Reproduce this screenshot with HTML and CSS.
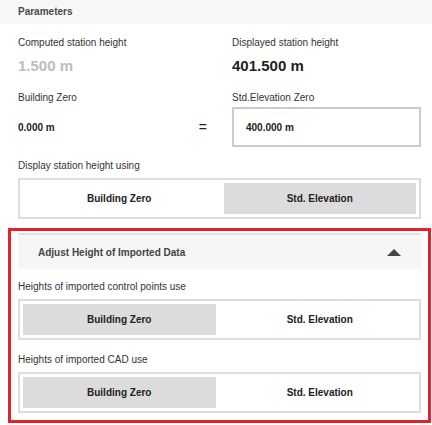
FILE: index.html
```html
<!DOCTYPE html>
<html>
<head>
<meta charset="utf-8">
<link rel="stylesheet" href="styles.css">
</head>
<body>
<div class="panel-title">Parameters</div>
<div class="main">
  <div class="pair-grid">
    <div class="cell">
      <div class="label">Computed station height</div>
      <div class="big-value muted">1.500 m</div>
    </div>
    <div class="cell">
      <div class="label">Displayed station height</div>
      <div class="big-value">401.500 m</div>
    </div>
  </div>
  <div class="pair-grid zero-row">
    <div class="cell">
      <div class="label">Building Zero</div>
      <div class="zero-left">
        <span class="small-value">0.000 m</span>
        <span class="equals">=</span>
      </div>
    </div>
    <div class="cell">
      <div class="label">Std.Elevation Zero</div>
      <div class="input-box"><span class="small-value">400.000 m</span></div>
    </div>
  </div>

  <div class="label section-label">Display station height using</div>
  <div class="segmented">
    <div class="seg-btn">Building Zero</div>
    <div class="seg-btn selected">Std. Elevation</div>
  </div>

  <div class="highlight">
    <div class="collapse-head">
      <span>Adjust Height of Imported Data</span>
      <span class="caret"></span>
    </div>
    <div class="label first-in">Heights of imported control points use</div>
    <div class="segmented">
      <div class="seg-btn selected">Building Zero</div>
      <div class="seg-btn">Std. Elevation</div>
    </div>
    <div class="label second-in">Heights of imported CAD use</div>
    <div class="segmented">
      <div class="seg-btn selected">Building Zero</div>
      <div class="seg-btn">Std. Elevation</div>
    </div>
  </div>
</div>
</body>
</html>
```
FILE: styles.css
```css
html, body {
  margin: 0;
  padding: 0;
  background: #ffffff;
  font-family: "Liberation Sans", Arial, sans-serif;
  color: #333333;
}

.panel-title {
  height: 24px;
  line-height: 24px;
  padding-left: 18px;
  background: #f7f7f7;
  font-size: 10px;
  font-weight: bold;
  color: #4a4a4a;
}

.main {
  padding: 0 11px 0 18px;
}

.pair-grid {
  display: grid;
  grid-template-columns: 1fr 189px;
  column-gap: 18px;
  margin-top: 13px;
}

.zero-row {
  margin-top: 17px;
}

.label {
  font-size: 10px;
  line-height: 12px;
  color: #333333;
}

.big-value {
  margin-top: 8px;
  font-size: 15px;
  line-height: 18px;
  font-weight: bold;
  color: #222222;
}

.big-value.muted {
  color: #bdbdbd;
}

.small-value {
  font-size: 10px;
  font-weight: bold;
  color: #222222;
}

.zero-left {
  margin-top: 3px;
  height: 40px;
  display: flex;
  align-items: center;
  justify-content: space-between;
  padding-right: 7px;
}

.equals {
  font-size: 14px;
  color: #222222;
  line-height: 14px;
}

.input-box {
  margin-top: 3px;
  height: 36px;
  border: 2px solid #cccccc;
  display: flex;
  align-items: center;
  padding-left: 12px;
}

.section-label {
  margin-top: 13px;
}

.segmented {
  margin-top: 6px;
  border: 2px solid #dddddd;
  padding: 3px;
  display: grid;
  grid-template-columns: 1fr 1fr;
  column-gap: 8px;
}

.seg-btn {
  height: 31px;
  display: flex;
  align-items: center;
  justify-content: center;
  font-size: 10px;
  font-weight: bold;
  color: #222222;
}

.seg-btn.selected {
  background: #dcdcdc;
}

.highlight {
  margin: 9px -10px 0 -10px;
  border: 3px solid #e5222b;
  padding: 2px 7px 7px 7px;
}

.collapse-head {
  height: 34px;
  border-top: 2px solid #e2e2e2;
  background: #f6f6f6;
  display: flex;
  align-items: center;
  justify-content: space-between;
  padding: 0 20px;
  font-size: 10px;
  font-weight: bold;
  color: #444444;
}

.caret {
  width: 0;
  height: 0;
  border-left: 7px solid transparent;
  border-right: 7px solid transparent;
  border-bottom: 7px solid #444444;
}

.first-in {
  margin-top: 12px;
}

.second-in {
  margin-top: 14px;
}
```
